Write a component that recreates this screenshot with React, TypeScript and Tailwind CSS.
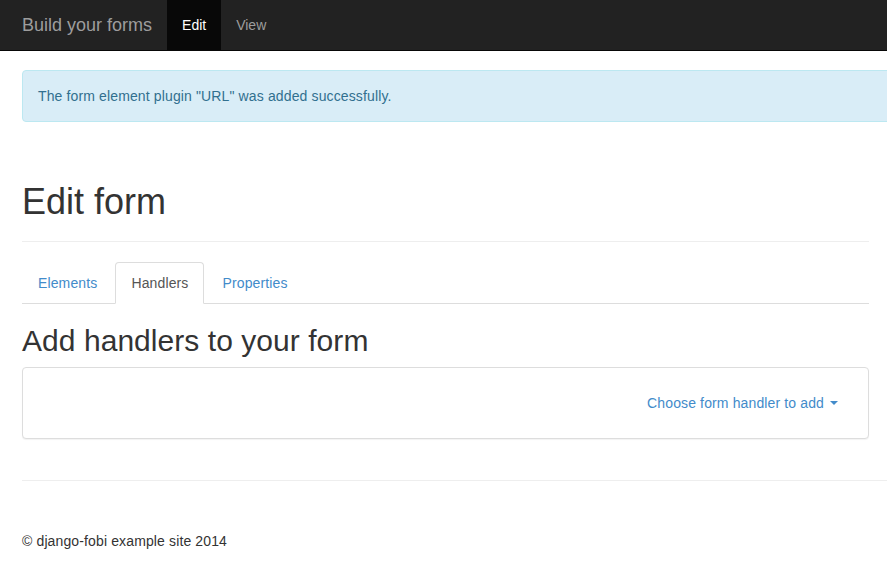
import React from "react";

export default function App() {
  return (
    <div className="min-h-[568px] overflow-hidden bg-white font-['Liberation_Sans',Arial,sans-serif] text-[14px] leading-[20px] text-[#333333]">
      <nav className="flex h-[51px] border-b border-[#080808] bg-[#222222] pl-[7px]">
        <a className="block h-[50px] px-[15px] py-[15px] text-[18px] leading-[20px] text-[#9d9d9d]">Build your forms</a>
        <a className="block h-[50px] bg-[#080808] px-[15px] py-[15px] text-white">Edit</a>
        <a className="block h-[50px] px-[15px] py-[15px] text-[#9d9d9d]">View</a>
      </nav>
      <div className="pl-[22px]">
        <div className="mr-[-30px] mt-[19px] mb-[20px] rounded-[4px] border border-[#bce8f1] bg-[#d9edf7] p-[15px] tracking-[0.13px] text-[#31708f]">
          The form element plugin "URL" was added successfully.
        </div>
        <div className="w-[847px]">
          <div className="mt-[60px] mb-[20px] border-b border-[#eeeeee] pb-[9px]">
            <h1 className="mt-0 mb-[10px] text-[36px] font-normal leading-[39.6px] text-[#333333]">Edit form</h1>
          </div>
          <ul className="flex border-b border-[#dddddd] tracking-[0.13px]">
            <li className="-mb-px mr-[2px]">
              <a className="block rounded-t-[4px] border border-transparent px-[15px] py-[10px] text-[#428bca]">Elements</a>
            </li>
            <li className="-mb-px mr-[2px]">
              <a className="block rounded-t-[4px] border border-[#dddddd] border-b-transparent bg-white px-[15px] py-[10px] text-[#555555]">Handlers</a>
            </li>
            <li className="-mb-px mr-[2px]">
              <a className="block rounded-t-[4px] border border-transparent px-[15px] py-[10px] text-[#428bca]">Properties</a>
            </li>
          </ul>
          <h2 className="mt-[20px] mb-[10px] text-[30px] font-normal leading-[33px] tracking-[0.05px] text-[#333333]">Add handlers to your form</h2>
          <div className="mb-[20px] rounded-[4px] border border-[#dddddd] bg-white shadow-[0_1px_1px_rgba(0,0,0,0.05)]">
            <div className="flex justify-end p-[15px]">
              <a className="flex items-center px-[15px] py-[10px] tracking-[0.13px] text-[#428bca]">
                Choose form handler to add
                <span className="ml-[6px] inline-block h-0 w-0 border-x-[4px] border-t-[4px] border-x-transparent border-t-[#428bca]" />
              </a>
            </div>
          </div>
        </div>
        <hr className="mr-[-30px] mt-[41px] border-0 border-t border-[#eeeeee]" />
        <p className="mt-[50px] tracking-[0.13px]">© django-fobi example site 2014</p>
      </div>
    </div>
  );
}
